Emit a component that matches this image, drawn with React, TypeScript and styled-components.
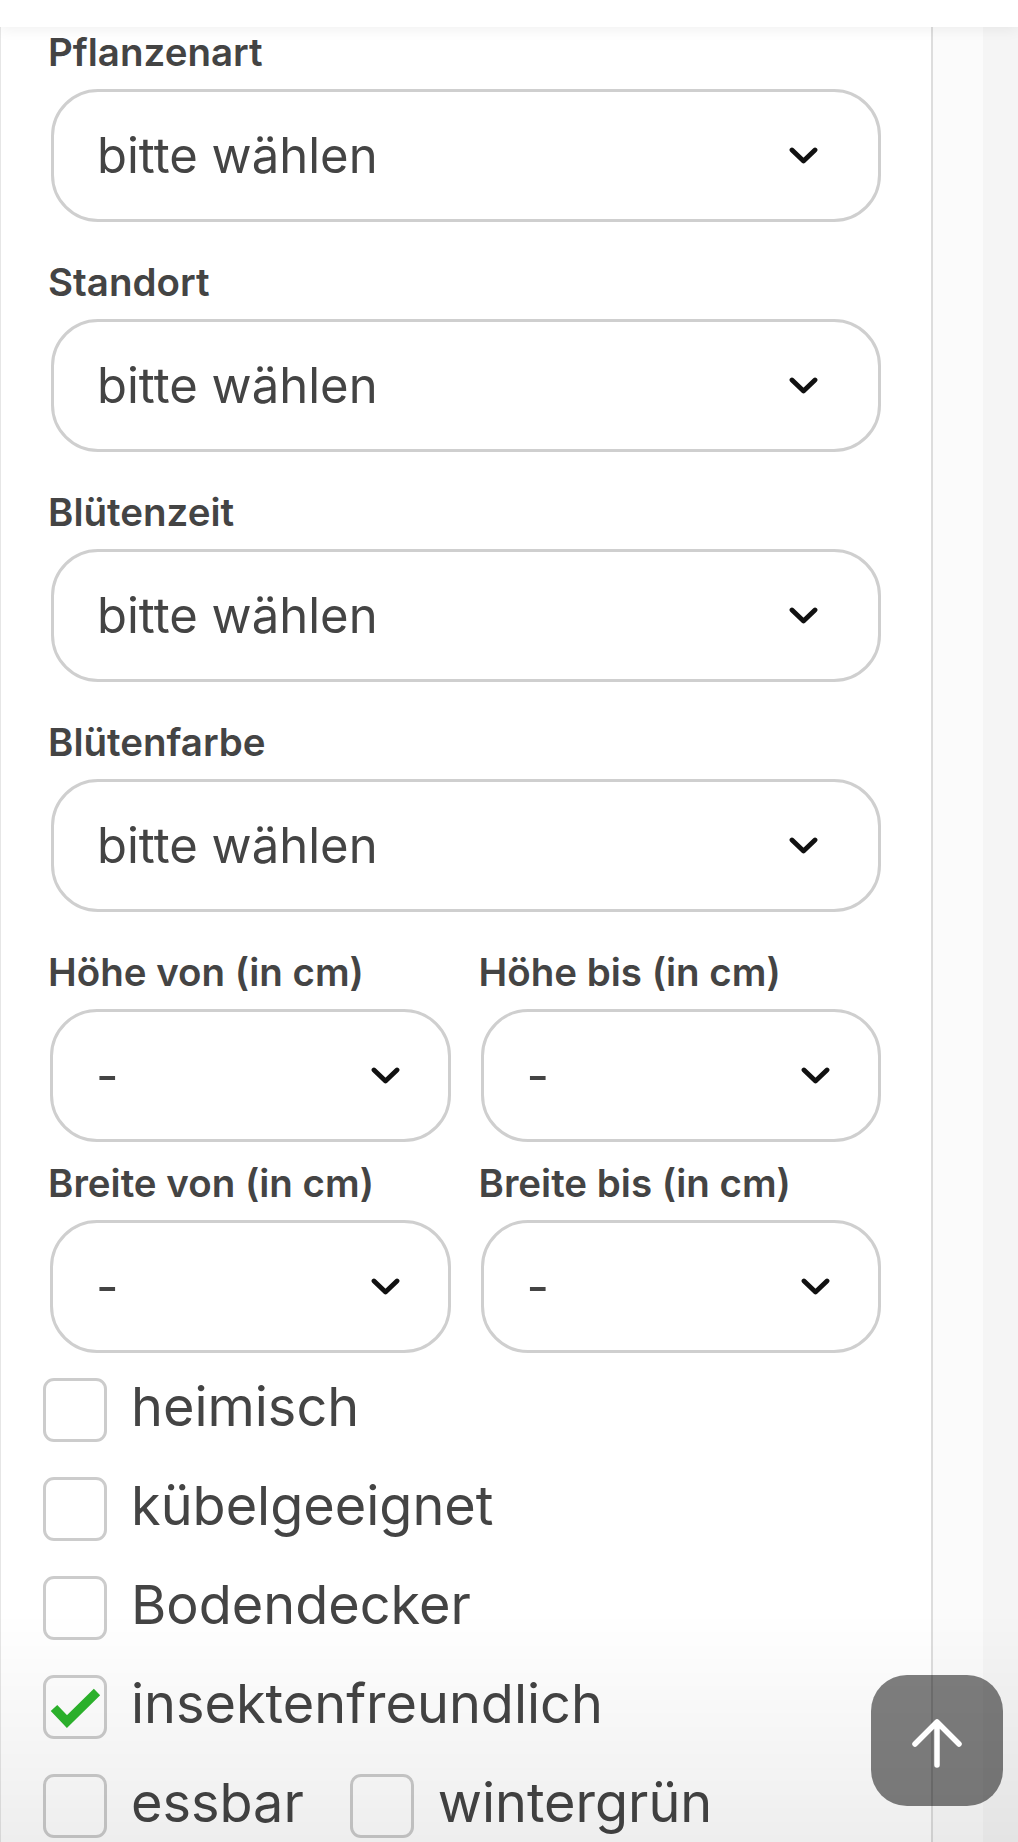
import React from "react";
import styled, { createGlobalStyle } from "styled-components";

const GlobalStyle = createGlobalStyle`
  html, body {
    margin: 0;
    padding: 0;
    background: #f4f4f4;
    overflow: hidden;
  }
  * {
    box-sizing: border-box;
  }
`;

const Page = styled.div`
  min-height: 100vh;
  display: flex;
  flex-direction: column;
  font-family: Inter, "Noto Sans", "Liberation Sans", sans-serif;
  color: #444444;
`;

const TopBar = styled.div`
  position: relative;
  z-index: 1;
  height: 27px;
  background: #ffffff;
  box-shadow: 0 3px 14px rgba(0, 0, 0, 0.06);
`;

const Body = styled.div`
  flex: 1;
  display: flex;
`;

const Panel = styled.div`
  width: 933px;
  flex-shrink: 0;
  background: #ffffff;
  border-left: 1px solid #e6e6e6;
  border-right: 2px solid #dddddd;
  padding: 3px 50px 0 47px;
`;

const Gutter = styled.div`
  width: 50px;
  flex-shrink: 0;
  background: #fbfbfb;
`;

const Rest = styled.div`
  flex: 1;
  background: #f5f5f5;
`;

const Field = styled.div<{ $gap: number }>`
  display: flex;
  flex-direction: column;
  margin-bottom: ${(p) => p.$gap}px;
`;

const Label = styled.div`
  font-size: 38.5px;
  line-height: 45px;
  font-weight: 600;
  color: #444444;
  margin-bottom: 14px;
  white-space: nowrap;
`;

const HalfRow = styled.div<{ $gap: number }>`
  display: grid;
  grid-template-columns: 1fr 1fr;
  column-gap: 28px;
  margin-bottom: ${(p) => p.$gap}px;
`;

const SelectBox = styled.div<{ $right: number; $inset: number }>`
  margin-left: ${(p) => p.$inset}px;
  height: 133px;
  border: 3px solid #cfcfcf;
  border-radius: 47px;
  background: #ffffff;
  display: flex;
  align-items: center;
  justify-content: space-between;
  padding: 0 ${(p) => p.$right}px 0 43px;
  font-size: 49px;
  color: #444444;
`;

const Chevron = styled.svg`
  width: 29px;
  height: 18px;
  flex-shrink: 0;
`;

const CheckList = styled.div`
  display: flex;
  flex-direction: column;
  gap: 35px;
  margin-left: -5px;
`;

const CheckRow = styled.div`
  display: flex;
  column-gap: 46px;
`;

const CheckItem = styled.label`
  display: flex;
  align-items: center;
  gap: 24px;
  height: 64px;
  font-size: 54px;
  color: #444444;
  white-space: nowrap;
`;

const CheckText = styled.span`
  padding-bottom: 7px;
`;

const Box = styled.span`
  width: 64px;
  height: 64px;
  flex-shrink: 0;
  border: 3px solid #cccccc;
  border-radius: 11px;
  background: #ffffff;
  display: flex;
  align-items: center;
  justify-content: center;
`;

const BottomFade = styled.div`
  position: fixed;
  left: 0;
  right: 0;
  bottom: 0;
  height: 230px;
  pointer-events: none;
  background: linear-gradient(
    to bottom,
    rgba(0, 0, 0, 0),
    rgba(0, 0, 0, 0.065)
  );
`;

const TopButton = styled.button`
  position: fixed;
  right: 15px;
  bottom: 36px;
  width: 132px;
  height: 131px;
  border: none;
  border-radius: 36px;
  background: rgba(0, 0, 0, 0.5);
  display: flex;
  align-items: center;
  justify-content: center;
  padding: 0;
`;

const ChevronIcon = () => (
  <Chevron viewBox="0 0 29 18">
    <polyline
      points="3,3 14.5,14 26,3"
      fill="none"
      stroke="#111"
      strokeWidth="4.8"
      strokeLinecap="round"
      strokeLinejoin="round"
    />
  </Chevron>
);

const Select = ({
  text,
  right,
  inset,
}: {
  text: string;
  right: number;
  inset: number;
}) => (
  <SelectBox $right={right} $inset={inset}>
    <span>{text}</span>
    <ChevronIcon />
  </SelectBox>
);

const Checkbox = ({ label, checked }: { label: string; checked?: boolean }) => (
  <CheckItem>
    <Box>
      {checked && (
        <svg width="58" height="58" viewBox="3 3 58 58">
          <path
            d="M11 33 L24 46.5 L54 17"
            fill="none"
            stroke="#2db52d"
            strokeWidth="9"
            strokeLinejoin="miter"
          />
        </svg>
      )}
    </Box>
    <CheckText>{label}</CheckText>
  </CheckItem>
);

const fullFields = ["Pflanzenart", "Standort", "Blütenzeit", "Blütenfarbe"];

const checkRows: { label: string; checked?: boolean }[][] = [
  [{ label: "heimisch" }],
  [{ label: "kübelgeeignet" }],
  [{ label: "Bodendecker" }],
  [{ label: "insektenfreundlich", checked: true }],
  [{ label: "essbar" }, { label: "wintergrün" }],
];

export default function App() {
  return (
    <>
      <GlobalStyle />
      <Page>
        <TopBar />
        <Body>
          <Panel>
            {fullFields.map((name) => (
              <Field key={name} $gap={38}>
                <Label>{name}</Label>
                <Select text="bitte wählen" right={60} inset={3} />
              </Field>
            ))}
            <HalfRow $gap={19}>
              <Field $gap={0}>
                <Label>Höhe von (in cm)</Label>
                <Select text="-" right={48} inset={2} />
              </Field>
              <Field $gap={0}>
                <Label>Höhe bis (in cm)</Label>
                <Select text="-" right={48} inset={2} />
              </Field>
            </HalfRow>
            <HalfRow $gap={25}>
              <Field $gap={0}>
                <Label>Breite von (in cm)</Label>
                <Select text="-" right={48} inset={2} />
              </Field>
              <Field $gap={0}>
                <Label>Breite bis (in cm)</Label>
                <Select text="-" right={48} inset={2} />
              </Field>
            </HalfRow>
            <CheckList>
              {checkRows.map((row, i) => (
                <CheckRow key={i}>
                  {row.map((c) => (
                    <Checkbox key={c.label} label={c.label} checked={c.checked} />
                  ))}
                </CheckRow>
              ))}
            </CheckList>
          </Panel>
          <Gutter />
          <Rest />
        </Body>
        <BottomFade />
        <TopButton aria-label="nach oben">
          <svg width="60" height="60" viewBox="0 0 60 60">
            <path
              d="M30 54 V12 M8 33 L30 11 L52 33"
              fill="none"
              stroke="#ffffff"
              strokeWidth="5.5"
              strokeLinecap="round"
              strokeLinejoin="round"
            />
          </svg>
        </TopButton>
      </Page>
    </>
  );
}
